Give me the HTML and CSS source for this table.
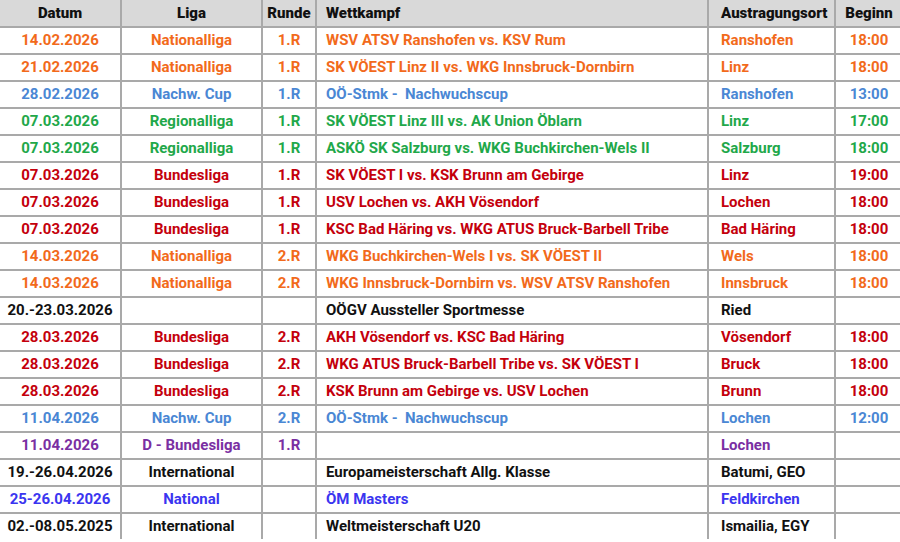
FILE: index.html
```html
<!DOCTYPE html>
<html lang="de">
<head>
<meta charset="utf-8">
<title>Termine</title>
<link rel="stylesheet" href="styles.css">
</head>
<body>
<table class="sched">
  <colgroup>
    <col class="c-date"><col class="c-liga"><col class="c-runde"><col class="c-wk"><col class="c-ort"><col class="c-beg">
  </colgroup>
  <thead>
    <tr><th>Datum</th><th>Liga</th><th>Runde</th><th class="l">Wettkampf</th><th class="l">Austragungsort</th><th>Beginn</th></tr>
  </thead>
  <tbody>
    <tr class="orange"><td>14.02.2026</td><td>Nationalliga</td><td>1.R</td><td class="l">WSV ATSV Ranshofen vs. KSV Rum</td><td class="l">Ranshofen</td><td>18:00</td></tr>
    <tr class="orange"><td>21.02.2026</td><td>Nationalliga</td><td>1.R</td><td class="l">SK VÖEST Linz II vs. WKG Innsbruck-Dornbirn</td><td class="l">Linz</td><td>18:00</td></tr>
    <tr class="lblue"><td>28.02.2026</td><td>Nachw. Cup</td><td>1.R</td><td class="l">OÖ-Stmk -&nbsp; Nachwuchscup</td><td class="l">Ranshofen</td><td>13:00</td></tr>
    <tr class="green"><td>07.03.2026</td><td>Regionalliga</td><td>1.R</td><td class="l">SK VÖEST Linz III vs. AK Union Öblarn</td><td class="l">Linz</td><td>17:00</td></tr>
    <tr class="green"><td>07.03.2026</td><td>Regionalliga</td><td>1.R</td><td class="l">ASKÖ SK Salzburg vs. WKG Buchkirchen-Wels II</td><td class="l">Salzburg</td><td>18:00</td></tr>
    <tr class="red"><td>07.03.2026</td><td>Bundesliga</td><td>1.R</td><td class="l">SK VÖEST I vs. KSK Brunn am Gebirge</td><td class="l">Linz</td><td>19:00</td></tr>
    <tr class="red"><td>07.03.2026</td><td>Bundesliga</td><td>1.R</td><td class="l">USV Lochen vs. AKH Vösendorf</td><td class="l">Lochen</td><td>18:00</td></tr>
    <tr class="red"><td>07.03.2026</td><td>Bundesliga</td><td>1.R</td><td class="l">KSC Bad Häring vs. WKG ATUS Bruck-Barbell Tribe</td><td class="l">Bad Häring</td><td>18:00</td></tr>
    <tr class="orange"><td>14.03.2026</td><td>Nationalliga</td><td>2.R</td><td class="l">WKG Buchkirchen-Wels I vs. SK VÖEST II</td><td class="l">Wels</td><td>18:00</td></tr>
    <tr class="orange"><td>14.03.2026</td><td>Nationalliga</td><td>2.R</td><td class="l">WKG Innsbruck-Dornbirn vs. WSV ATSV Ranshofen</td><td class="l">Innsbruck</td><td>18:00</td></tr>
    <tr class="black"><td>20.-23.03.2026</td><td></td><td></td><td class="l">OÖGV Aussteller Sportmesse</td><td class="l">Ried</td><td></td></tr>
    <tr class="red"><td>28.03.2026</td><td>Bundesliga</td><td>2.R</td><td class="l">AKH Vösendorf vs. KSC Bad Häring</td><td class="l">Vösendorf</td><td>18:00</td></tr>
    <tr class="red"><td>28.03.2026</td><td>Bundesliga</td><td>2.R</td><td class="l">WKG ATUS Bruck-Barbell Tribe vs. SK VÖEST I</td><td class="l">Bruck</td><td>18:00</td></tr>
    <tr class="red"><td>28.03.2026</td><td>Bundesliga</td><td>2.R</td><td class="l">KSK Brunn am Gebirge vs. USV Lochen</td><td class="l">Brunn</td><td>18:00</td></tr>
    <tr class="lblue"><td>11.04.2026</td><td>Nachw. Cup</td><td>2.R</td><td class="l">OÖ-Stmk -&nbsp; Nachwuchscup</td><td class="l">Lochen</td><td>12:00</td></tr>
    <tr class="purple"><td>11.04.2026</td><td>D - Bundesliga</td><td>1.R</td><td class="l"></td><td class="l">Lochen</td><td></td></tr>
    <tr class="black"><td>19.-26.04.2026</td><td>International</td><td></td><td class="l">Europameisterschaft Allg. Klasse</td><td class="l">Batumi, GEO</td><td></td></tr>
    <tr class="blue"><td>25-26.04.2026</td><td>National</td><td></td><td class="l">ÖM Masters</td><td class="l">Feldkirchen</td><td></td></tr>
    <tr class="black"><td>02.-08.05.2025</td><td>International</td><td></td><td class="l">Weltmeisterschaft U20</td><td class="l">Ismailia, EGY</td><td></td></tr>
  </tbody>
</table>
</body>
</html>
```

FILE: styles.css
```css
html, body {
  margin: 0;
  padding: 0;
  background: #ffffff;
}

.sched {
  border-collapse: collapse;
  table-layout: fixed;
  width: 902px;
  border-style: hidden;
  font-family: Roboto, "Liberation Sans", sans-serif;
  font-weight: 700;
  font-size: 15px;
}

.c-date { width: 121px; }
.c-liga { width: 141px; }
.c-runde { width: 54px; }
.c-wk { width: 392px; }
.c-ort { width: 127px; }
.c-beg { width: 67px; }

.sched th,
.sched td {
  height: 25px;
  padding: 0;
  border: 2px solid #a9a9a9;
  text-align: center;
  vertical-align: middle;
  white-space: nowrap;
  line-height: 25px;
}

.sched th {
  height: 26px;
  line-height: 26px;
  background: #d9d9d9;
  color: #111111;
  font-weight: 900;
}

.sched tbody tr:last-child td {
  border-bottom: 2px solid #a9a9a9;
}

.sched .l {
  text-align: left;
  padding-left: 9px;
}

.sched td.l:nth-child(5),
.sched th.l:nth-child(5) {
  padding-left: 12px;
}

.orange { color: #f26a1b; }
.lblue { color: #4a87d4; }
.green { color: #1fa84a; }
.red { color: #c4000c; }
.purple { color: #7a2fa2; }
.black { color: #111111; }
.blue { color: #3a35f0; }
```
